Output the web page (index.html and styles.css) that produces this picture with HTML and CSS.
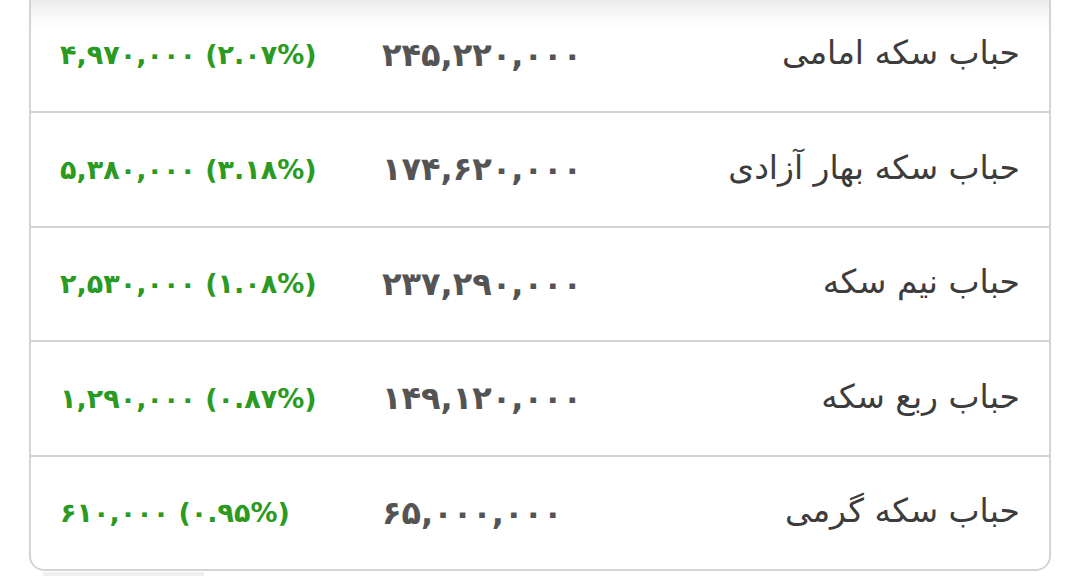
FILE: index.html
```html
<!DOCTYPE html>
<html lang="fa">
<head>
    <meta charset="UTF-8">
    <meta name="viewport" content="width=device-width, initial-scale=1.0">
    <title>حباب سکه</title>
    <link rel="stylesheet" href="styles.css">
</head>
<body>
    <div class="bubble-table">
        <div class="bubble-row">
            <div class="change" dir="ltr">۴,۹۷۰,۰۰۰ (۲.۰۷%)</div>
            <div class="value" dir="ltr">۲۴۵,۲۲۰,۰۰۰</div>
            <div class="title" dir="rtl">حباب سکه امامی</div>
        </div>
        <div class="bubble-row">
            <div class="change" dir="ltr">۵,۳۸۰,۰۰۰ (۳.۱۸%)</div>
            <div class="value" dir="ltr">۱۷۴,۶۲۰,۰۰۰</div>
            <div class="title" dir="rtl">حباب سکه بهار آزادی</div>
        </div>
        <div class="bubble-row">
            <div class="change" dir="ltr">۲,۵۳۰,۰۰۰ (۱.۰۸%)</div>
            <div class="value" dir="ltr">۲۳۷,۲۹۰,۰۰۰</div>
            <div class="title" dir="rtl">حباب نیم سکه</div>
        </div>
        <div class="bubble-row">
            <div class="change" dir="ltr">۱,۲۹۰,۰۰۰ (۰.۸۷%)</div>
            <div class="value" dir="ltr">۱۴۹,۱۲۰,۰۰۰</div>
            <div class="title" dir="rtl">حباب ربع سکه</div>
        </div>
        <div class="bubble-row">
            <div class="change" dir="ltr">۶۱۰,۰۰۰ (۰.۹۵%)</div>
            <div class="value" dir="ltr">۶۵,۰۰۰,۰۰۰</div>
            <div class="title" dir="rtl">حباب سکه گرمی</div>
        </div>
    </div>
    <div class="scroll-bar"></div>
</body>
</html>
```

FILE: styles.css
```css
body {
    margin: 0;
    background-color: #fff;
    font-family: "DejaVu Sans", sans-serif;
    overflow: hidden;
}
.bubble-table {
    margin: -3.5px 29px 0 29px;
    border: 2px solid #d4d4d4;
    border-radius: 0 0 15px 15px;
    background: linear-gradient(to bottom, #ebebeb 0, #fafafa 18px, #fff 30px);
}
.bubble-row {
    display: flex;
    align-items: center;
    height: 112.5px;
    padding: 0 29px;
    border-bottom: 2px solid #d4d4d4;
}
.bubble-row:last-child {
    border-bottom: none;
}
.change {
    width: 322px;
    color: #2a9a22;
    font-size: 27px;
    font-weight: bold;
    text-align: left;
}
.value {
    flex: 1;
    color: #545454;
    font-size: 32px;
    font-weight: bold;
    text-align: left;
}
.title {
    color: #3c3c3c;
    font-size: 33px;
    text-align: right;
    margin-top: -4px;
}
.scroll-bar {
    width: 161px;
    height: 6px;
    margin: 1px 0 0 43px;
    background-color: #efefef;
}
```
